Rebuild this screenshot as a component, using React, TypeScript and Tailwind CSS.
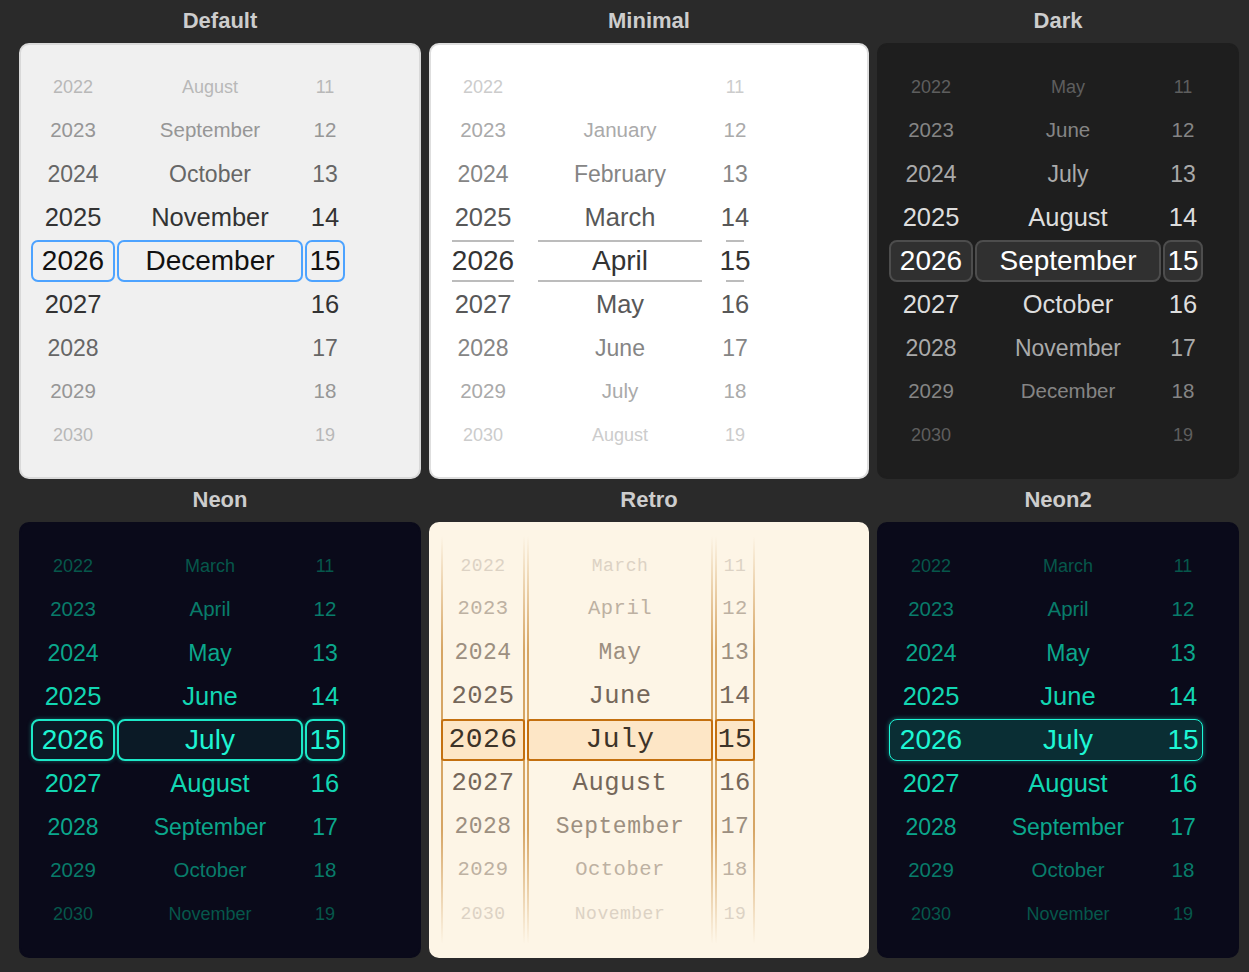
import React from "react";

type Theme = {
  name: string;
  panel: string;
  font: string;
  tones: string[];
  box: string;
  band?: string;
  retro?: boolean;
  months: string[];
};

const sizes = ["text-[28px]", "text-[25.5px]", "text-[23px]", "text-[20.5px]", "text-[18px]"];

const years = ["2022", "2023", "2024", "2025", "2026", "2027", "2028", "2029", "2030"];
const days = ["11", "12", "13", "14", "15", "16", "17", "18", "19"];
const springMonths = ["March", "April", "May", "June", "July", "August", "September", "October", "November"];

const themes: Theme[] = [
  {
    name: "Default",
    panel: "bg-[#f0f0f0] border-[#d9d9d9]",
    font: "font-['Liberation_Sans',Arial,sans-serif]",
    tones: ["text-[#111111]", "text-[#333333]", "text-[#666666]", "text-[#969696]", "text-[#b8b8b8]"],
    box: "rounded-[7px] border-2 border-[#4da3ff]",
    months: ["August", "September", "October", "November", "December", "", "", "", ""],
  },
  {
    name: "Minimal",
    panel: "bg-white border-[#dedede]",
    font: "font-['Liberation_Sans',Arial,sans-serif]",
    tones: ["text-[#333333]", "text-[#585858]", "text-[#858585]", "text-[#aaaaaa]", "text-[#cccccc]"],
    box: "mx-[11px] border-y-2 border-[#bcbcbc]",
    months: ["", "January", "February", "March", "April", "May", "June", "July", "August"],
  },
  {
    name: "Dark",
    panel: "bg-[#1e1e1e] border-[#1e1e1e]",
    font: "font-['Liberation_Sans',Arial,sans-serif]",
    tones: ["text-[#ffffff]", "text-[#dddddd]", "text-[#aaaaaa]", "text-[#858585]", "text-[#5e5e5e]"],
    box: "rounded-[8px] border-2 border-[#4d4d4d] bg-[#303030]",
    months: ["May", "June", "July", "August", "September", "October", "November", "December", ""],
  },
  {
    name: "Neon",
    panel: "bg-[#0a0a1a] border-[#0a0a1a]",
    font: "font-['Liberation_Sans',Arial,sans-serif]",
    tones: ["text-[#1ef4d2]", "text-[#12d6b2]", "text-[#0ba78c]", "text-[#087c6a]", "text-[#06574b]"],
    box: "rounded-[8px] border-2 border-[#1de9c8] bg-[#0b1a26] shadow-[0_0_4px_rgba(30,240,210,0.35)]",
    months: springMonths,
  },
  {
    name: "Retro",
    panel: "bg-[#fdf5e6] border-[#fdf5e6]",
    font: "font-['Liberation_Mono','Courier_New',monospace] tracking-[0.5px]",
    tones: ["text-[#3d3328]", "text-[#75675a]", "text-[#9c8f80]", "text-[#bdb1a2]", "text-[#dcd2c4]"],
    box: "rounded-[3px] border-2 border-[#c4700f] bg-[#fde6c6]",
    retro: true,
    months: springMonths,
  },
  {
    name: "Neon2",
    panel: "bg-[#0a0a1a] border-[#0a0a1a]",
    font: "font-['Liberation_Sans',Arial,sans-serif]",
    tones: ["text-[#1ef7d4]", "text-[#12d6b2]", "text-[#0ba78c]", "text-[#087c6a]", "text-[#06574b]"],
    box: "",
    band: "rounded-[8px] border-[1.5px] border-[#1cf7d6] bg-[#0a2e34] shadow-[0_0_5px_rgba(30,247,214,0.45)]",
    months: springMonths,
  },
];

function Wheel({ items, width, theme }: { items: string[]; width: string; theme: Theme }) {
  return (
    <div className={`relative flex h-full flex-col justify-center ${width}`}>
      {theme.retro && (
        <>
          <div className="absolute bottom-0 left-0 top-0 w-[2px] rounded-full bg-[linear-gradient(to_bottom,transparent,#d6a564_28%,#d6a564_72%,transparent)]" />
          <div className="absolute bottom-0 right-0 top-0 w-[2px] rounded-full bg-[linear-gradient(to_bottom,transparent,#d6a564_28%,#d6a564_72%,transparent)]" />
        </>
      )}
      {items.map((item, i) => {
        const d = Math.abs(i - 4);
        const text = `${sizes[d]} ${theme.tones[d]} leading-none whitespace-nowrap`;
        return (
          <div key={i} className="flex h-[43.5px] items-center justify-center">
            {i === 4 && !theme.band ? (
              <div className={`relative flex h-[42px] min-w-0 flex-1 items-center justify-center ${theme.box}`}>
                <span className={text}>{item}</span>
              </div>
            ) : (
              <span className={text}>{item}</span>
            )}
          </div>
        );
      })}
    </div>
  );
}

function Picker({ theme }: { theme: Theme }) {
  return (
    <div className="flex flex-col">
      <div className="pb-[9px] pt-[8px] text-center font-['Liberation_Sans',Arial,sans-serif] text-[22px] font-bold leading-[26px] text-[#cdcdcd]">
        {theme.name}
      </div>
      <div className={`h-[436px] rounded-[10px] border-2 px-[10px] py-[12px] ${theme.panel} ${theme.font}`}>
        <div className="relative flex h-full w-fit gap-[2px]">
          {theme.band && <div className={`absolute left-0 right-0 top-[183px] h-[42px] ${theme.band}`} />}
          <Wheel items={years} width="w-[84px]" theme={theme} />
          <Wheel items={theme.months} width="w-[186px]" theme={theme} />
          <Wheel items={days} width="w-[40px]" theme={theme} />
        </div>
      </div>
    </div>
  );
}

export default function App() {
  return (
    <div className="min-h-screen w-full bg-[#2a2a2a] pl-[19px]">
      <div className="grid grid-cols-[402px_440px_362px] gap-x-2">
        {themes.map((t) => (
          <Picker key={t.name} theme={t} />
        ))}
      </div>
    </div>
  );
}
